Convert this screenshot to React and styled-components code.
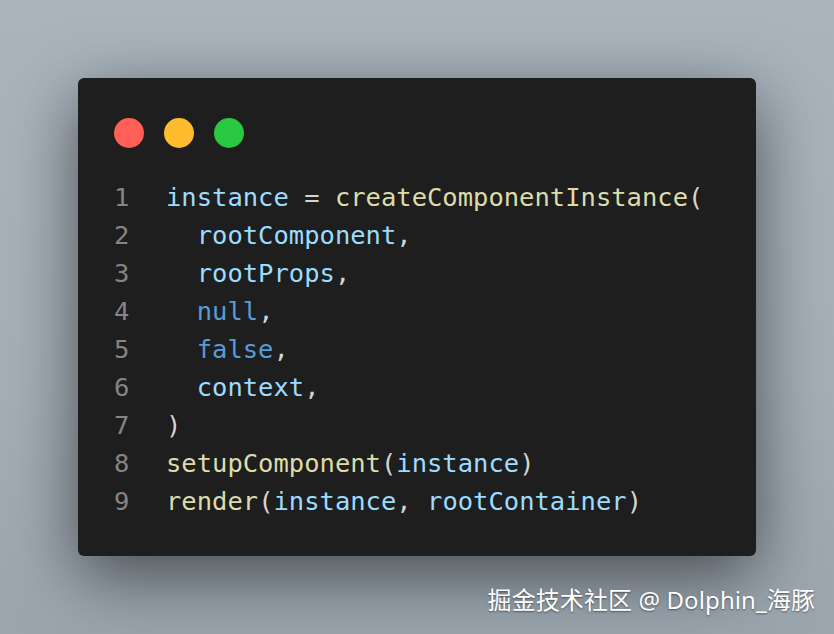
import styled, { createGlobalStyle } from 'styled-components';

const GlobalStyle = createGlobalStyle`
    html, body {
        margin: 0;
        padding: 0;
    }
    body {
        width: 834px;
        height: 634px;
        overflow: hidden;
        font-family: "Liberation Sans", sans-serif;
    }
`;

const Page = styled.div`
    width: 834px;
    height: 634px;
    box-sizing: border-box;
    padding: 78px 78px 0 78px;
    background: linear-gradient(180deg, #aab4bd 0%, #a5afb8 60%, #9aa5ae 100%);
    display: flex;
    flex-direction: column;
`;

const Card = styled.div`
    width: 678px;
    height: 478px;
    box-sizing: border-box;
    background-color: #1e1e1e;
    border-radius: 6px;
    padding: 40px 36px 0 36px;
    box-shadow: 0 20px 68px rgba(0, 0, 0, 0.55);
    display: flex;
    flex-direction: column;
`;

const Dots = styled.div`
    display: flex;
    gap: 20px;
    height: 30px;
    margin-bottom: 30px;
`;

const Dot = styled.span`
    width: 30px;
    height: 30px;
    border-radius: 50%;
    background-color: ${props => props.color};
`;

const Code = styled.div`
    display: flex;
    flex-direction: column;
    font-family: "DejaVu Sans Mono", "Liberation Mono", monospace;
    font-size: 25.5px;
`;

const Line = styled.div`
    display: flex;
    height: 38px;
    line-height: 38px;
    white-space: pre;
`;

const LineNo = styled.span`
    width: 52px;
    color: #858585;
`;

const Tok = styled.span`
    color: ${props => props.c};
`;

const VAR = '#9cdcfe';
const FN = '#dcdcaa';
const PUN = '#d4d4d4';
const KW = '#569cd6';

const lines = [
    [['instance', VAR], [' = ', PUN], ['createComponentInstance', FN], ['(', PUN]],
    [['  rootComponent', VAR], [',', PUN]],
    [['  rootProps', VAR], [',', PUN]],
    [['  null', KW], [',', PUN]],
    [['  false', KW], [',', PUN]],
    [['  context', VAR], [',', PUN]],
    [[')', PUN]],
    [['setupComponent', FN], ['(', PUN], ['instance', VAR], [')', PUN]],
    [['render', FN], ['(', PUN], ['instance', VAR], [', ', PUN], ['rootContainer', VAR], [')', PUN]],
];

const Watermark = styled.div`
    align-self: flex-end;
    margin-top: 28px;
    margin-right: -59px;
    font-family: "Noto Sans", "Noto Sans CJK SC", sans-serif;
    font-size: 24px;
    line-height: 32px;
    color: #ffffff;
    text-shadow: 0 1px 2px rgba(0, 0, 0, 0.45);
    letter-spacing: 0.1px;
`;

const App = () => {
    return (
        <>
            <GlobalStyle />
            <Page>
                <Card>
                    <Dots>
                        <Dot color="#ff5f57" />
                        <Dot color="#febc2e" />
                        <Dot color="#28c840" />
                    </Dots>
                    <Code>
                        {lines.map((toks, i) => (
                            <Line key={i}>
                                <LineNo>{i + 1}</LineNo>
                                {toks.map(([t, c], j) => <Tok key={j} c={c}>{t}</Tok>)}
                            </Line>
                        ))}
                    </Code>
                </Card>
                <Watermark>掘金技术社区 @ Dolphin_海豚</Watermark>
            </Page>
        </>
    );
}

export default App;
